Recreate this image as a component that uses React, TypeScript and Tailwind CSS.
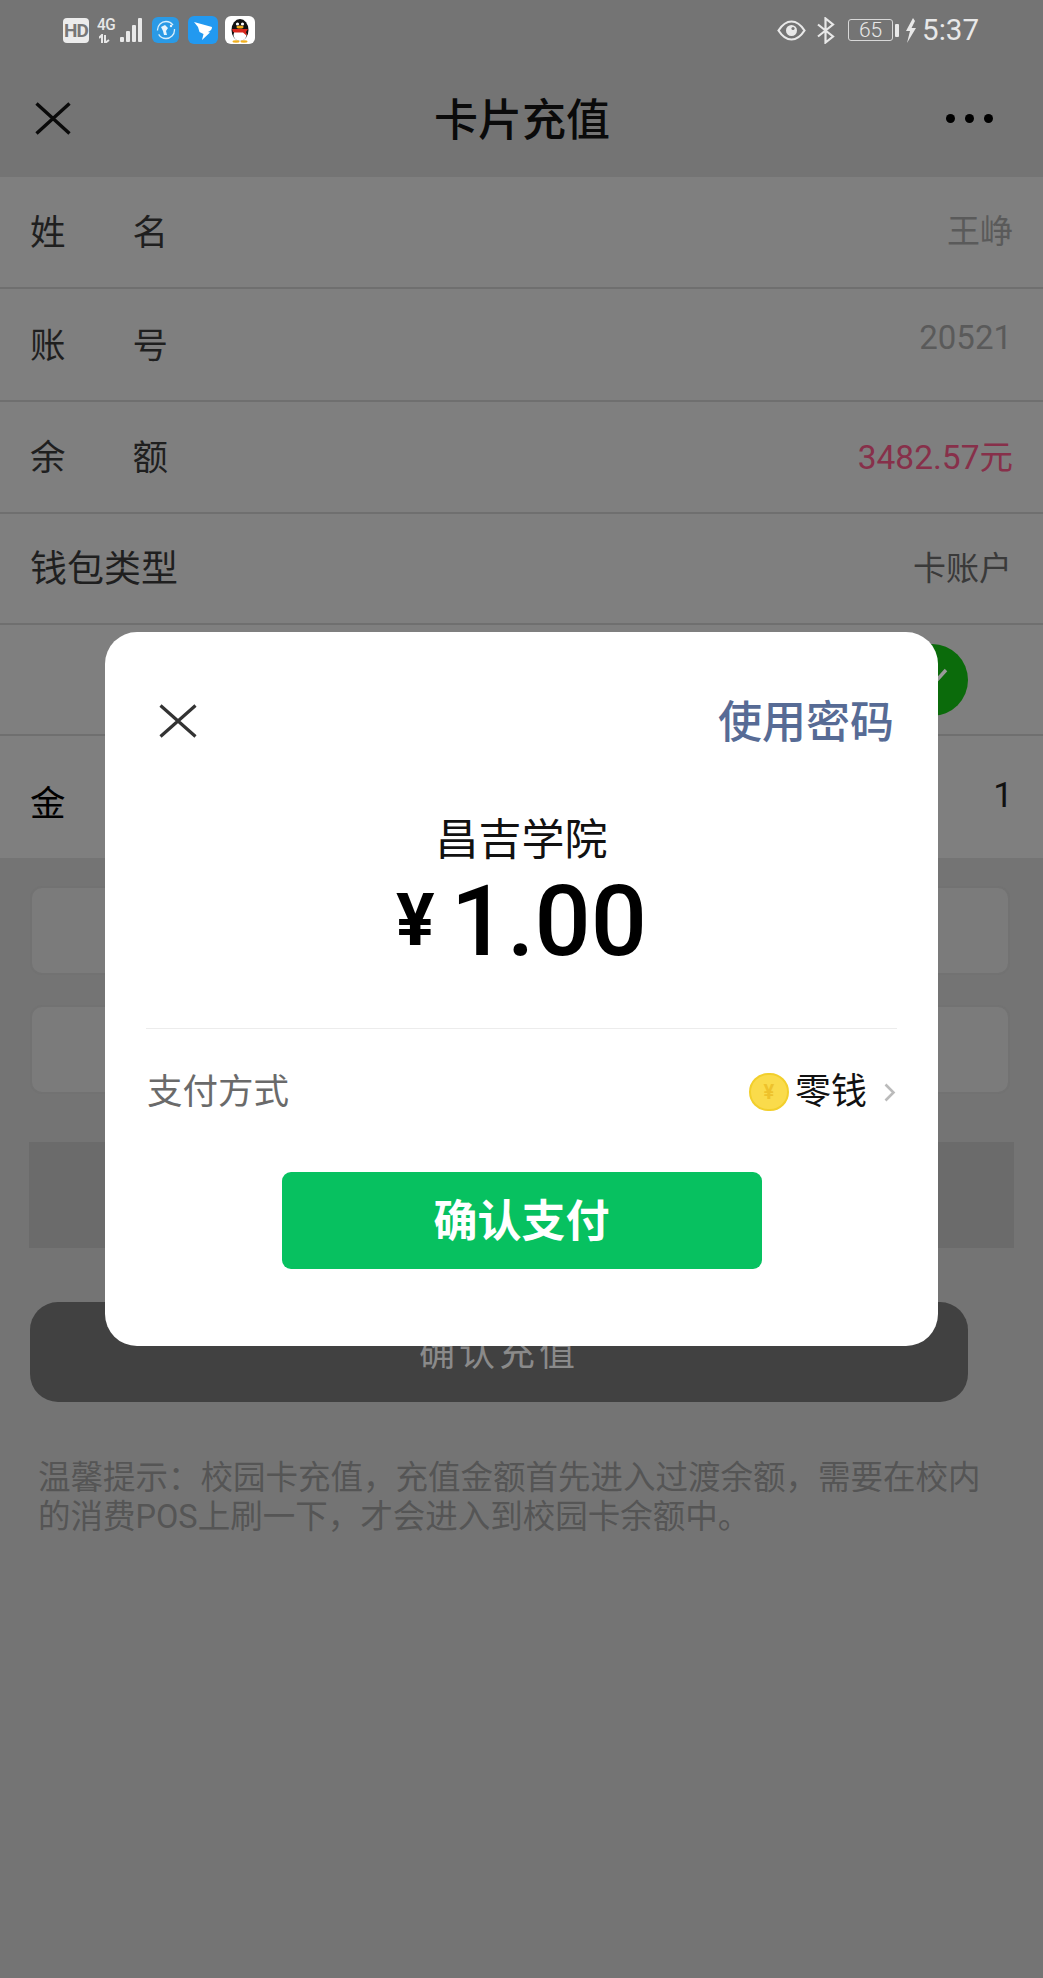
import React from "react";

const cjk = "font-['Roboto','Noto_Sans_CJK_SC',sans-serif]";
const hint = "温馨提示\uFF1A校园卡充值\uFF0C充值金额首先进入过渡余额\uFF0C需要在校内的消费POS上刷一下\uFF0C才会进入到校园卡余额中\u3002";

function StatusBar() {
  return (
    <div className="h-[60px] flex items-center justify-between pl-[63px] pr-[64px] text-[#e8e8e8]">
      <div className="flex items-center">
        <div className="w-[26px] h-[25px] rounded-[4px] bg-[#ececec] text-[#777777] text-[19px] leading-[25px] font-bold text-center tracking-[-1px]">HD</div>
        <div className="ml-[10px] w-[15px] h-[26px] flex flex-col items-center">
          <span className="text-[17px] leading-[15px] font-medium scale-x-90 tracking-[-0.5px]">4G</span>
          <svg width="15" height="9" viewBox="0 0 15 9" className="mt-[2px]">
            <path d="M0 4 L3 1 V9 M6 1 V9 L10 6" fill="none" stroke="#e8e8e8" strokeWidth="2" />
          </svg>
        </div>
        <svg width="29" height="26" viewBox="0 0 29 26" className="ml-[1px]">
          <rect x="5" y="20" width="4" height="5" rx="1" fill="#e8e8e8" />
          <rect x="11" y="14" width="4" height="11" rx="1" fill="#e8e8e8" />
          <rect x="17" y="8" width="4" height="17" rx="1" fill="#e8e8e8" />
          <rect x="23" y="1" width="4" height="24" rx="1" fill="#e8e8e8" />
        </svg>
        <svg width="27" height="26" viewBox="0 0 27 26" className="ml-[8px]">
          <rect width="27" height="26" rx="6" fill="#2a9ae6" />
          <circle cx="14" cy="13" r="8.5" fill="none" stroke="#d8eefc" strokeWidth="1.3" strokeDasharray="22 4" />
          <path d="M9 10 L13 8 L16 11 L14 14 L15 18 L12 18 L11 14 Z" fill="#e6f4fd" />
          <circle cx="19" cy="9" r="1.2" fill="#e6f4fd" />
        </svg>
        <svg width="30" height="28" viewBox="0 0 30 28" className="ml-[9px]">
          <rect width="30" height="28" rx="6" fill="#2299f0" />
          <path d="M6 6 L24 11 C24 14 22 15 20 16 L22 16.5 L14 24 L15.5 18 L11.5 16 L10 11 Z" fill="#ffffff" />
        </svg>
        <svg width="30" height="28" viewBox="0 0 30 28" className="ml-[7px]">
          <rect width="30" height="28" rx="6" fill="#ffffff" />
          <ellipse cx="15" cy="14" rx="8.5" ry="11" fill="#111111" />
          <ellipse cx="15" cy="19" rx="6.5" ry="6" fill="#ffffff" />
          <circle cx="12.5" cy="8" r="1.6" fill="#ffffff" />
          <circle cx="17.5" cy="8" r="1.6" fill="#ffffff" />
          <ellipse cx="15" cy="11" rx="3.5" ry="1.5" fill="#f2b01e" />
          <path d="M7 13 H23 L21 16 L22 20 L18 16.5 H10 L8 16 Z" fill="#d9261c" />
          <ellipse cx="11" cy="25.5" rx="3.5" ry="1.2" fill="#f2b01e" />
          <ellipse cx="19" cy="25.5" rx="3.5" ry="1.2" fill="#f2b01e" />
        </svg>
      </div>
      <div className="flex items-center">
        <svg width="29" height="21" viewBox="0 0 29 21">
          <path d="M1.5 10.5 C6 3.5 10 1.5 14.5 1.5 C19 1.5 23 3.5 27.5 10.5 C23 17.5 19 19.5 14.5 19.5 C10 19.5 6 17.5 1.5 10.5 Z" fill="none" stroke="#e8e8e8" strokeWidth="2.2" />
          <circle cx="14.5" cy="10.5" r="5.5" fill="#e8e8e8" />
          <circle cx="16" cy="8.5" r="1.6" fill="#777777" />
        </svg>
        <svg width="18" height="27" viewBox="0 0 18 27" className="ml-[11px]">
          <path d="M1 7.5 L16 19.5 L8.5 25.5 V1.5 L16 7.5 L1 19.5" fill="none" stroke="#e8e8e8" strokeWidth="2.2" />
        </svg>
        <div className="ml-[13px] w-[45px] h-[22px] rounded-[3px] border border-[#d8d8d8] text-[21px] leading-[20px] text-center font-['Roboto',sans-serif] font-light">65</div>
        <div className="ml-[2px] w-[4px] h-[13px] rounded-[1px] bg-[#e8e8e8]" />
        <svg width="11" height="25" viewBox="0 0 11 25" className="ml-[6px]">
          <path d="M8 0 L1 13 H5 L2 25 L11 10 H6.5 L10 3 Z" fill="#e8e8e8" />
        </svg>
        <span className="ml-[6px] text-[29.5px] leading-[30px] font-['Roboto',sans-serif]">5:37</span>
      </div>
    </div>
  );
}

function Header() {
  return (
    <div className="h-[117px] grid grid-cols-[1fr_auto_1fr] items-center pl-[35px] pr-[50px] bg-[#747474]">
      <svg width="36" height="33" viewBox="0 0 36 33">
        <path d="M1.5 1.5 L34.5 31.5 M34.5 1.5 L1.5 31.5" stroke="#0a0a0a" strokeWidth="3.4" />
      </svg>
      <h1 className="text-[44px] leading-[60px] font-medium text-[#0a0a0a] pt-[4px] translate-x-[8px]">卡片充值</h1>
      <div className="flex gap-[10px] justify-self-end">
        <span className="w-[9px] h-[9px] rounded-full bg-black" />
        <span className="w-[9px] h-[9px] rounded-full bg-black" />
        <span className="w-[9px] h-[9px] rounded-full bg-black" />
      </div>
    </div>
  );
}

function SpacedLabel({ a, b }: { a: string; b: string }) {
  return (
    <span className="w-[138px] flex justify-between text-[35.5px] leading-[50px] text-[#1f1f1f] pt-[2px]">
      <span>{a}</span>
      <span>{b}</span>
    </span>
  );
}

function Row({ h, children }: { h: string; children: React.ReactNode }) {
  return <div className={`${h} flex items-center justify-between pl-[30px] pr-[30px] bg-[#7f7f7f] border-b-2 border-[#6f6f6f]`}>{children}</div>;
}

function Modal() {
  return (
    <div className="absolute left-[105px] top-[632px] w-[833px] h-[714px] rounded-[32px] bg-white flex flex-col">
      <div className="flex items-center justify-between pt-[62px] pl-[54px] pr-[44px]">
        <svg width="38" height="34" viewBox="0 0 38 34">
          <path d="M1.5 1.5 L36.5 32.5 M36.5 1.5 L1.5 32.5" stroke="#333333" strokeWidth="3.2" />
        </svg>
        <span className="text-[44px] leading-[50px] text-[#576b95] font-medium pt-[4px]">使用密码</span>
      </div>
      <div className="mt-[64px] text-center text-[43px] leading-[56px] text-[#111111]">昌吉学院</div>
      <div className="flex items-center justify-center h-[90px] mt-[8px] text-black font-['Roboto',sans-serif]">
        <span className="text-[72px] leading-[90px] font-bold mr-[16px]">¥</span>
        <span className="text-[99px] leading-[90px] font-medium">1.00</span>
      </div>
      <div className="mt-[62px] mx-[41px] border-t border-[#ececec]" />
      <div className="mt-[28px] flex items-center pl-[42px] pr-[42px] h-[70px]">
        <span className="text-[35.5px] leading-[50px] text-[#6a6a6a]">支付方式</span>
        <span className="ml-auto w-[40px] h-[38px] rounded-full bg-[#fadb4b] border-2 border-[#f2cf2c] text-[#eec22c] text-[20px] leading-[34px] text-center font-bold">¥</span>
        <span className="ml-[6px] text-[36px] leading-[50px] text-[#111111]">零钱</span>
        <svg width="12" height="19" viewBox="0 0 12 19" className="ml-[17px]">
          <path d="M1.5 1.5 L9.5 9.5 L1.5 17.5" fill="none" stroke="#bbbbbb" strokeWidth="2.6" />
        </svg>
      </div>
      <button className="mt-[45px] self-center w-[480px] h-[97px] rounded-[9px] bg-[#07c160] text-white text-[44px] leading-[60px] font-bold pt-[3px]">确认支付</button>
    </div>
  );
}

export default function App() {
  return (
    <div className={`relative w-[1043px] h-[1978px] overflow-hidden bg-[#747474] ${cjk}`}>
      <StatusBar />
      <Header />
      <Row h="h-[112px]">
        <SpacedLabel a="姓" b="名" />
        <span className="text-[33px] leading-[44px] text-[#5a5a5a]">王峥</span>
      </Row>
      <Row h="h-[113px]">
        <SpacedLabel a="账" b="号" />
        <span className="text-[33px] leading-[44px] text-[#5a5a5a] pb-[14px] pr-[1px]">20521</span>
      </Row>
      <Row h="h-[112px]">
        <SpacedLabel a="余" b="额" />
        <span className="text-[33.5px] leading-[44px] text-[#87304a] pt-[2px]">3482.57元</span>
      </Row>
      <Row h="h-[111px]">
        <span className="text-[37px] leading-[50px] text-[#1f1f1f] pt-[2px]">钱包类型</span>
        <span className="text-[33px] leading-[44px] text-[#3a3a3a] pr-[1px]">卡账户</span>
      </Row>
      <Row h="h-[111px]">
        <span />
        <span className="mr-[45px] w-[72px] h-[72px] rounded-full bg-[#0b6b0b] flex items-center justify-center">
          <svg width="48" height="36" viewBox="0 0 48 36">
            <path d="M10 20 L20 28 L38 8" fill="none" stroke="#9a9a9a" strokeWidth="3.4" />
          </svg>
        </span>
      </Row>
      <div className="h-[122px] flex items-center justify-between pl-[30px] pr-[30px] bg-[#7f7f7f]">
        <span className="text-[35.5px] leading-[50px] text-black pt-[14px]">金</span>
        <span className="text-[35px] leading-[44px] text-[#111111] pb-[3px]">1</span>
      </div>
      <div className="pl-[30px] pr-[33px] pt-[28px]">
        <div className="h-[89px] rounded-[12px] bg-[#7b7b7b] border-2 border-[#727272]" />
        <div className="mt-[30px] h-[89px] rounded-[12px] bg-[#7b7b7b] border-2 border-[#727272]" />
      </div>
      <div className="mt-[48px] ml-[29px] w-[985px] h-[106px] bg-[#6b6b6b]" />
      <button className="mt-[54px] ml-[30px] w-[938px] h-[100px] rounded-[28px] bg-[#414141] text-[#8a8a8a] text-[36px] leading-[50px] tracking-[4px] pt-[3px]">确认充值</button>
      <p className="mt-[57px] ml-[38px] w-[960px] text-[32.5px] leading-[39px] text-[#555555]">{hint}</p>
      <Modal />
    </div>
  );
}
